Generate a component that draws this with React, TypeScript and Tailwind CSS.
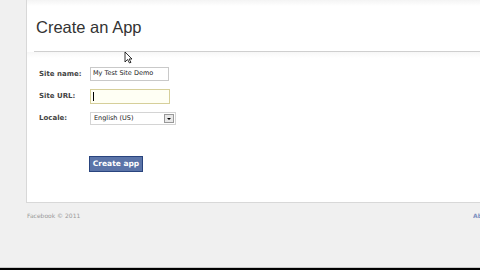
import React from 'react';

export default function App() {
  return (
    <div className="w-[480px] h-[270px] bg-[#f0f0f0] flex flex-col relative overflow-hidden" style={{ fontFamily: '"DejaVu Sans", sans-serif' }}>
      <div className="flex h-[203px]">
        <div className="w-[26px] bg-[#f0f0f0]" />
        <div className="flex-1 bg-white border-l border-b border-[#d8d8d8] bg-gradient-to-b from-[#f4f4f4] via-white to-white from-0% via-[3%] flex flex-col">
          <h1 className="pl-[9px] pt-[19px] h-[51px] text-[16.5px] text-[#333] leading-none" style={{ fontFamily: '"Liberation Sans", sans-serif' }}>
            Create an App
          </h1>
          <div className="ml-[7px] h-[1px] bg-[#cfcfcf]" />
          <div className="h-[6px] bg-gradient-to-b from-[#f7f7f7] to-white" />
          <div className="pl-[12px] pt-[9px] flex flex-col gap-[8px] text-[7px]">
            <div className="flex items-center h-[14px]">
              <span className="w-[51px] font-bold text-[#444]">Site name:</span>
              <div className="w-[79px] h-[14px] border border-[#c9c9c9] flex items-center px-[2px] text-[6.5px] text-[#222]">My Test Site Demo</div>
            </div>
            <div className="flex items-center h-[15px]">
              <span className="w-[51px] font-bold text-[#444]">Site URL:</span>
              <div className="w-[80px] h-[15px] border border-[#d6cf9a] bg-[#fffff4] flex items-center px-[2px]">
                <div className="w-[1px] h-[9px] bg-black" />
              </div>
            </div>
            <div className="flex items-center h-[13px]">
              <span className="w-[51px] font-bold text-[#444]">Locale:</span>
              <div className="w-[86px] h-[13px] border border-[#d4d4d4] flex items-center justify-between pl-[3px] pr-[1px] text-[6.5px] text-[#222]">
                <span>English (US)</span>
                <div className="w-[10px] h-[9px] bg-[#e8e8e8] border border-[#999] flex items-center justify-center">
                  <div className="w-0 h-0 border-l-[2px] border-r-[2px] border-t-[2px] border-l-transparent border-r-transparent border-t-black" />
                </div>
              </div>
            </div>
          </div>
          <div className="pl-[62px] pt-[24px]">
            <button className="w-[54px] h-[16px] bg-[#5b74a8] border border-[#29447e] text-white text-[7.5px] font-bold">Create app</button>
          </div>
        </div>
      </div>
      <div className="flex-1 flex justify-between items-start pt-[8px] pl-[27px] text-[6px] text-[#999]">
        <span>Facebook © 2011</span>
        <span className="text-[#7b8fbf] font-bold w-[7px] overflow-hidden whitespace-nowrap">About</span>
      </div>
      <div className="h-[1px] bg-[#c8c8c8]" />
      <div className="h-[2px] bg-black" />
      <svg className="absolute left-[124px] top-[51px]" width="9" height="13" viewBox="0 0 9 13">
        <path d="M1 1 L1 11 L3.5 8.5 L5.5 12 L7 11.3 L5 8 L8 8 Z" fill="white" stroke="black" strokeWidth="0.8" />
      </svg>
    </div>
  );
}
